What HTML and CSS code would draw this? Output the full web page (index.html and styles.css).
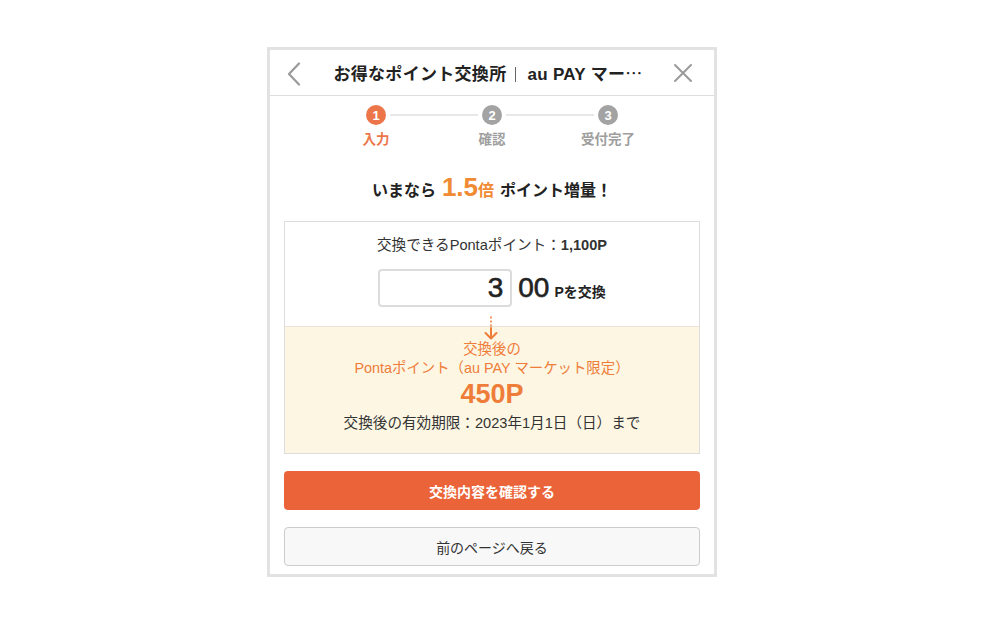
FILE: index.html
```html
<!DOCTYPE html>
<html lang="ja">
<head>
<meta charset="utf-8">
<title>お得なポイント交換所</title>
<link rel="stylesheet" href="styles.css">
</head>
<body>
<div class="frame">
  <header class="header">
    <span class="icon-btn back">
      <svg width="14" height="24" viewBox="0 0 14 24"><path d="M12 1.5 L2 12 L12 22.5" fill="none" stroke="#9a9a9a" stroke-width="2.2" stroke-linecap="round" stroke-linejoin="round"/></svg>
    </span>
    <h1 class="title">お得なポイント交換所<span class="sep"></span>au PAY マー<span class="cjk">…</span></h1>
    <span class="icon-btn close">
      <svg width="20" height="20" viewBox="0 0 20 20"><path d="M2 2 L18 18 M18 2 L2 18" fill="none" stroke="#9a9a9a" stroke-width="2" stroke-linecap="round"/></svg>
    </span>
  </header>

  <div class="steps">
    <div class="step-dots">
      <span class="dot active">1</span>
      <span class="connector"></span>
      <span class="dot">2</span>
      <span class="connector"></span>
      <span class="dot">3</span>
    </div>
    <div class="step-labels">
      <span class="label active">入力</span>
      <span class="label">確認</span>
      <span class="label">受付完了</span>
    </div>
  </div>

  <p class="promo">いまなら<span class="rate">1.5</span><span class="rate-unit">倍</span>ポイント増量！</p>

  <section class="card">
    <div class="card-top">
      <p class="available">交換できるPontaポイント：<b>1,100P</b></p>
      <div class="amount-row">
        <div class="amount-input">3</div>
        <span class="amount-fixed">00</span>
        <span class="amount-unit">Pを交換</span>
      </div>
    </div>
    <div class="card-bottom">
      <svg class="down-arrow" width="16" height="24" viewBox="0 0 16 24">
        <path d="M8 0.5 V2.5 M8 4.5 V6.5 M8 8.5 V10.5" stroke="#ef7d3a" stroke-width="1.6"/>
        <path d="M8 12 V22.5 M2.5 17 L8 22.5 L13.5 17" fill="none" stroke="#ef7d3a" stroke-width="2" stroke-linecap="round" stroke-linejoin="round"/>
      </svg>
      <p class="after-label">交換後の<br>Pontaポイント（au PAY マーケット限定）</p>
      <p class="after-value">450P</p>
      <p class="expiry">交換後の有効期限：2023年1月1日（日）まで</p>
    </div>
  </section>

  <div class="actions">
    <button class="btn primary" type="button">交換内容を確認する</button>
    <button class="btn secondary" type="button">前のページへ戻る</button>
  </div>
</div>
</body>
</html>
```

FILE: styles.css
```css
* { box-sizing: border-box; }

body {
  margin: 0;
  background: #ffffff;
  font-family: "Liberation Sans", "Noto Sans CJK JP", sans-serif;
  color: #333333;
}

.frame {
  width: 450px;
  margin: 47px auto 0;
  border: 3px solid #e2e2e2;
  background: #ffffff;
  padding-bottom: 8px;
}

.header {
  height: 46px;
  border-bottom: 1px solid #dedede;
  display: grid;
  grid-template-columns: 50px 1fr 50px;
  align-items: center;
}

.icon-btn {
  display: flex;
  align-items: center;
  justify-content: center;
}

.back { justify-content: flex-start; padding-left: 17px; padding-top: 2px; }
.close { justify-content: flex-end; padding-right: 21px; padding-top: 1px; }

.title {
  margin: 0;
  padding-right: 8px;
  font-size: 17px;
  font-weight: 700;
  color: #222222;
  text-align: center;
  white-space: nowrap;
  letter-spacing: 0.3px;
}

.sep {
  display: inline-block;
  width: 1px;
  height: 15px;
  background: #666666;
  margin: 0 11px 0 9px;
  vertical-align: -2px;
}

.cjk {
  font-family: "Noto Sans CJK JP", sans-serif;
  font-weight: 400;
}

.steps {
  padding-top: 9px;
}

.step-dots {
  display: flex;
  justify-content: center;
  align-items: center;
}

.dot {
  width: 20px;
  height: 20px;
  border-radius: 50%;
  background: #a3a3a3;
  color: #ffffff;
  font-size: 13px;
  font-weight: 700;
  display: flex;
  align-items: center;
  justify-content: center;
  line-height: 1;
}

.dot.active { background: #ec7549; }

.connector {
  width: 88px;
  height: 2px;
  margin: 0 4px;
  background: #e8e8e8;
}

.step-labels {
  display: flex;
  justify-content: center;
  margin-top: 5px;
}

.label {
  width: 116px;
  text-align: center;
  font-size: 13.5px;
  font-weight: 700;
  line-height: 19px;
  color: #9e9e9e;
}

.label.active { color: #ec7549; }

.promo {
  margin: 23px 0 0;
  display: flex;
  justify-content: center;
  align-items: baseline;
  font-size: 16px;
  font-weight: 700;
  color: #222222;
  line-height: 30px;
}

.rate {
  font-size: 26px;
  color: #f08a33;
  margin-left: 6px;
  font-weight: 700;
}

.rate-unit {
  color: #f08a33;
  margin-right: 6px;
}

.card {
  margin: 15px 14px 0;
  border: 1px solid #dddddd;
}

.card-top {
  padding: 13px 0 19px;
  text-align: center;
}

.available {
  margin: 0;
  font-size: 14.6px;
  line-height: 20px;
  color: #333333;
}

.available b { font-weight: 700; }

.amount-row {
  margin-top: 14px;
  display: flex;
  justify-content: center;
  align-items: center;
}

.amount-input {
  width: 134px;
  height: 38px;
  border: 2px solid #dcdcdc;
  border-radius: 4px;
  background: #ffffff;
  text-align: right;
  padding-right: 7px;
  font-size: 28px;
  font-weight: 400;
  -webkit-text-stroke: 0.6px #222222;
  line-height: 34px;
  color: #222222;
}

.amount-fixed {
  margin-left: 6px;
  font-size: 28px;
  font-weight: 400;
  -webkit-text-stroke: 0.6px #222222;
  color: #222222;
  line-height: 34px;
}

.amount-unit {
  margin-left: 5px;
  font-size: 14px;
  font-weight: 700;
  color: #222222;
  padding-top: 6px;
}

.card-bottom {
  background: #fcf6e3;
  border-top: 1px solid #e9e4d6;
  text-align: center;
  padding-bottom: 20px;
}

.down-arrow {
  display: block;
  margin: -11px auto 0;
  position: relative;
  left: -1px;
}

.after-label {
  margin: 0;
  font-size: 14.4px;
  line-height: 19px;
  color: #ef7d3a;
}

.after-value {
  margin: 0;
  font-size: 27px;
  font-weight: 700;
  line-height: 33px;
  color: #ef7d3a;
}

.expiry {
  margin: 2px 0 0;
  font-size: 14.6px;
  line-height: 20px;
  color: #333333;
}

.actions {
  margin: 17px 14px 0;
  display: flex;
  flex-direction: column;
  gap: 17px;
}

.btn {
  display: block;
  width: 100%;
  height: 39px;
  border-radius: 4px;
  font-family: "Liberation Sans", "Noto Sans CJK JP", sans-serif;
  font-size: 14px;
  cursor: pointer;
}

.btn.primary {
  background: #eb6338;
  border: none;
  color: #ffffff;
  font-weight: 700;
}

.btn.secondary {
  background: #f8f8f8;
  border: 1px solid #cccccc;
  color: #333333;
}
```
